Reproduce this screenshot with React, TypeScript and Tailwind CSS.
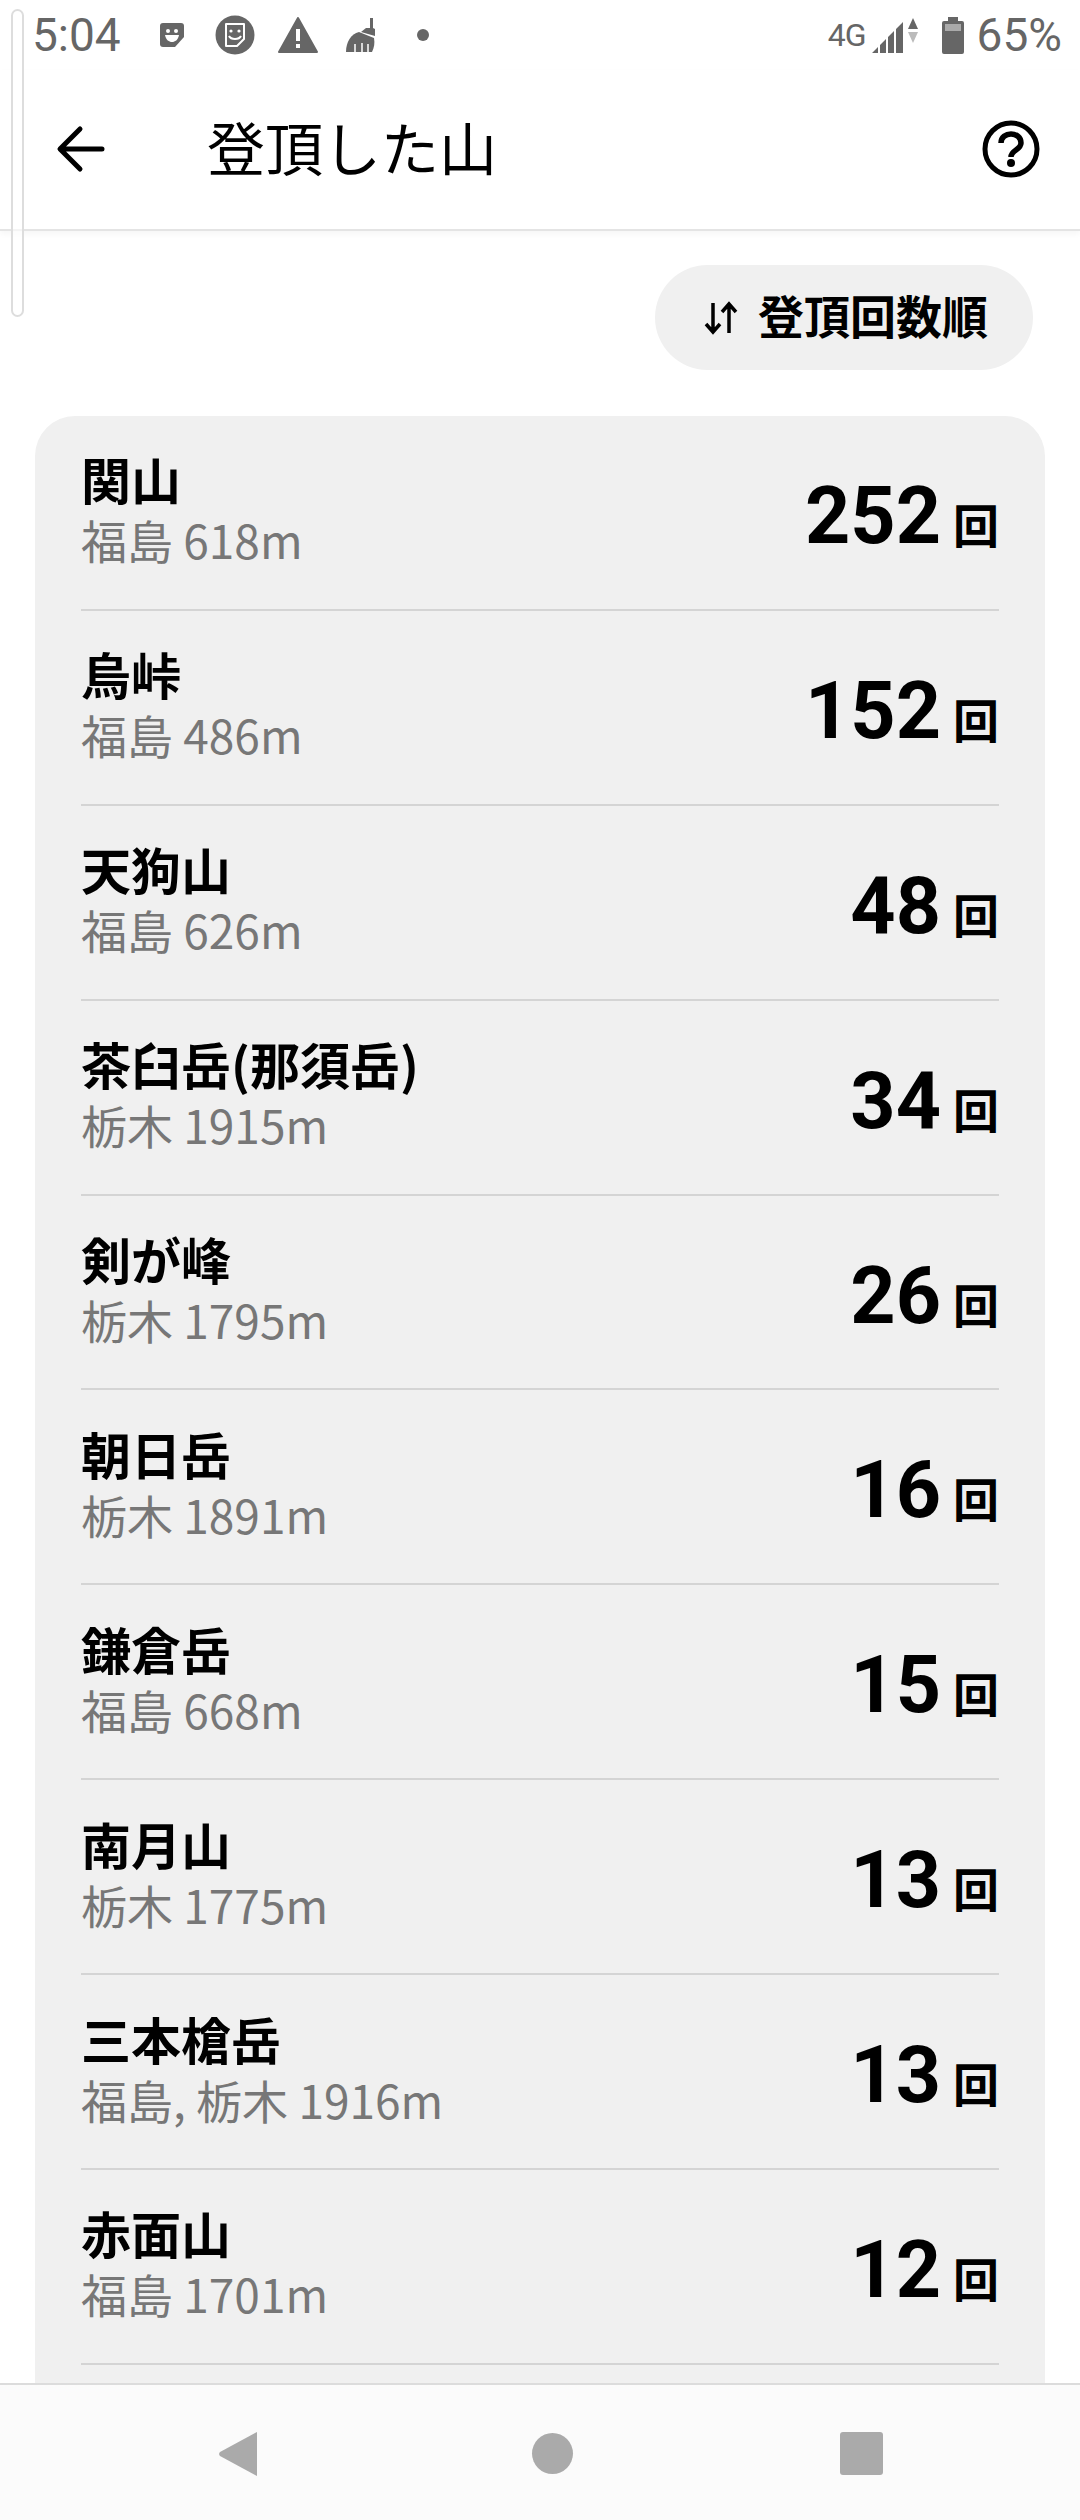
const FONT = "font-['Noto_Sans_CJK_JP','Noto_Sans',sans-serif]";

const MOUNTAINS = [
  { name: "関山", sub: "福島 618m", count: 252 },
  { name: "烏峠", sub: "福島 486m", count: 152 },
  { name: "天狗山", sub: "福島 626m", count: 48 },
  { name: "茶臼岳(那須岳)", sub: "栃木 1915m", count: 34 },
  { name: "剣が峰", sub: "栃木 1795m", count: 26 },
  { name: "朝日岳", sub: "栃木 1891m", count: 16 },
  { name: "鎌倉岳", sub: "福島 668m", count: 15 },
  { name: "南月山", sub: "栃木 1775m", count: 13 },
  { name: "三本槍岳", sub: "福島, 栃木 1916m", count: 13 },
  { name: "赤面山", sub: "福島 1701m", count: 12 },
];

function StatusBar() {
  return (
    <div className="h-[70px] shrink-0 flex items-center justify-between pl-[32px] pr-[18px] text-[#666] font-['Roboto',sans-serif]">
      <div className="flex items-center">
        <span className="text-[46px] leading-none w-[128px]">5:04</span>
        {/* sticker */}
        <svg width="24" height="24" viewBox="0 0 24 24" className="mr-[31px]">
          <path d="M3 0h18a3 3 0 0 1 3 3v11l-9 10H3a3 3 0 0 1-3-3V3a3 3 0 0 1 3-3z" fill="#666" />
          <circle cx="8" cy="8" r="2" fill="#fff" />
          <circle cx="16" cy="8" r="2" fill="#fff" />
          <path d="M5 12h14c-1 5-4 7-7 7s-6-2-7-7z" fill="#fff" />
        </svg>
        <svg width="40" height="40" viewBox="0 0 40 40" className="mr-[23px]">
          <circle cx="20" cy="20" r="19.5" fill="#666" />
          <path d="M11 9h18v15l-7 7H11z" fill="#666" stroke="#fff" strokeWidth="2" strokeLinejoin="round" />
          <circle cx="16" cy="16" r="1.6" fill="#fff" />
          <circle cx="24" cy="16" r="1.6" fill="#fff" />
          <path d="M14 21c2 4 10 4 12 0" fill="none" stroke="#fff" strokeWidth="2" />
        </svg>
        <svg width="40" height="36" viewBox="0 0 40 36" className="mr-[28px]">
          <path d="M20 1 39 35H1z" fill="#666" stroke="#666" strokeWidth="2" strokeLinejoin="round" />
          <rect x="18" y="12" width="4" height="12" fill="#fff" />
          <rect x="18" y="27" width="4" height="4" fill="#fff" />
        </svg>
        <svg width="30" height="34" viewBox="0 0 30 34" className="mr-[41px]">
          <path d="M24 0h3v10l2 1v7L15 14l5-4h4z" fill="#666" />
          <path d="M13 14 28 20c1 5 0 10-2 14H0C0 24 5 16 13 14z" fill="#666" />
          <path d="M9 26v8M16 25v9M22 26v8" stroke="#fff" strokeWidth="1.5" />
        </svg>
        <span className="w-[12px] h-[12px] rounded-full bg-[#666]" />
      </div>
      <div className="flex items-center">
        <span className="text-[32px] leading-none tracking-[-1px]">4G</span>
        <svg width="48" height="36" viewBox="0 0 48 36" className="ml-[6px] mr-[22px]">
          <path d="M0 36 6 30v6zM8 28l6-6v14H8zM16 20l6-6v22h-6zM24 12l7-7v31h-7z" fill="#666" />
          <path d="M36 12 41 1l5 11z" fill="#666" />
          <path d="M36 15h10l-5 11z" fill="#bbb" />
        </svg>
        <svg width="22" height="37" viewBox="0 0 22 37" className="mr-[13px]">
          <path d="M6 0h10v4h4a2 2 0 0 1 2 2v29a2 2 0 0 1-2 2H2a2 2 0 0 1-2-2V6a2 2 0 0 1 2-2h4z" fill="#666" />
          <rect x="3" y="7" width="16" height="7" fill="#aaa" />
        </svg>
        <span className="text-[46px] leading-none">65%</span>
      </div>
    </div>
  );
}

function Header() {
  return (
    <div className="h-[161px] shrink-0 flex items-center pl-[55px] pr-[40px] pb-[2px] border-b-2 border-[#e4e4e4] shadow-[0_3px_6px_rgba(0,0,0,0.04)] bg-white">
      <svg width="50" height="50" viewBox="0 0 50 50" className="shrink-0">
        <path d="M47 25H6M25 5 5 25l20 20" fill="none" stroke="#000" strokeWidth="5" strokeLinecap="round" strokeLinejoin="round" />
      </svg>
      <h1 className={`${FONT} ml-[102px] mb-[6px] text-[58px] leading-none font-normal text-black`}>登頂した山</h1>
      <svg width="58" height="58" viewBox="0 0 58 58" className="ml-auto shrink-0">
        <circle cx="29" cy="29" r="26" fill="none" stroke="#000" strokeWidth="5" />
        <path d="M19 23c0-6 5-9 10-9s10 3 10 9c0 7-10 7-10 14" fill="none" stroke="#000" strokeWidth="5.5" />
        <circle cx="29" cy="43" r="4" fill="#000" />
      </svg>
    </div>
  );
}

function Row({ name, sub, count }: { name: string; sub: string; count: number }) {
  return (
    <div className="h-[194.9px] shrink-0 flex items-center justify-between border-b-2 border-[#d4d4d4] pb-[7px]">
      <div className="flex flex-col pt-[2px]">
        <span className="text-[50px] leading-[60px] font-bold text-black">{name}</span>
        <span className="text-[46px] leading-[63px] text-[#777]">{sub}</span>
      </div>
      <div className="flex items-baseline text-black pt-[15px]">
        <span className="font-['Roboto',sans-serif] text-[79px] leading-none font-bold">{count}</span>
        <span className="ml-[12px] text-[46px] leading-none font-bold">回</span>
      </div>
    </div>
  );
}

export default function App() {
  return (
    <div className={`${FONT} relative w-[1080px] h-[2520px] overflow-hidden bg-white flex flex-col`}>
      <StatusBar />
      <Header />
      <div className="flex-1 min-h-0 overflow-hidden">
        <div className="flex justify-end pt-[34px] pr-[47px]">
          <button className="h-[105px] w-[378px] rounded-full bg-[#f0f0f0] flex items-center justify-center gap-[19px] text-[46px] font-bold text-black">
            <svg width="36" height="34" viewBox="0 0 36 34" className="ml-[3px]">
              <path d="M10 2v29M3 23l7 8 7-8M26 32V3M19 11l7-8 7 8" fill="none" stroke="#000" strokeWidth="3.5" />
            </svg>
            <span className="mb-[6px]">登頂回数順</span>
          </button>
        </div>
        <div className="mx-[35px] mt-[46px] rounded-[40px] bg-[#f0f0f0] pl-[46px] pr-[46px] pb-[60px] flex flex-col">
          {MOUNTAINS.map((m) => (
            <Row key={m.name} {...m} />
          ))}
        </div>
      </div>
      <div className="h-[137px] shrink-0 bg-[#fbfbfb] border-t-2 border-[#dcdcdc] flex items-center pt-[2px]">
        <div className="flex w-full items-center pl-[218px]">
          <svg width="42" height="46" viewBox="0 0 42 46">
            <path d="M39 1v44L2 25a3 3 0 0 1 0-4z" fill="#aaa" />
          </svg>
          <span className="ml-[272px] w-[41px] h-[41px] rounded-full bg-[#aaa]" />
          <span className="ml-[267px] w-[43px] h-[43px] rounded-[3px] bg-[#aaa]" />
        </div>
      </div>
      {/* overlay scrollbar left edge */}
      <div className="absolute left-[11px] top-[9px] w-[13px] h-[308px] rounded-full border-2 border-[#ddd] bg-white/60" />
    </div>
  );
}
